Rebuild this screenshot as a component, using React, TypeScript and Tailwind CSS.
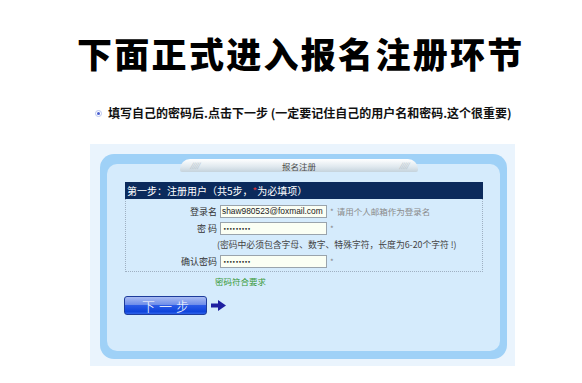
export default function App() {
  return (
    <div className="w-[582px] h-[383px] bg-white overflow-hidden font-['Noto_Sans_CJK_SC','Noto_Sans',sans-serif]">
      <div className="pt-[35px] pl-[77px] text-[35px] leading-[35px] font-black tracking-[2.3px] text-black whitespace-nowrap">
        下面正式进入报名注册环节
      </div>
      <div className="mt-[35px] h-[16px] flex items-center pl-[95px] whitespace-nowrap">
        <div className="w-[7px] h-[7px] rounded-full border border-[#b8c4ee] bg-white flex items-center justify-center">
          <div className="w-[3px] h-[3px] rounded-full bg-[#4a5fd0]" />
        </div>
        <div className="ml-[6px] text-[12px] leading-[16px] font-bold text-[#111]">
          填写自己的密码后.点击下一步 (一定要记住自己的用户名和密码.这个很重要)
        </div>
      </div>
      <div className="mt-[23px] ml-[90px] w-[425px] h-[222px] bg-[#eaf4fd] pt-[10px] pl-[10px] pr-[8px] pb-[7px]">
        <div className="relative h-full rounded-[14px] bg-[#9fd1f7] pt-[10px] px-[7px] pb-[8px]">
          <div className="absolute left-[80px] top-[5px] w-[238px] h-[13px] rounded-t-[10px] rounded-b-[2px] bg-[linear-gradient(to_bottom,#ffffff,#dfe8ee_60%,#c5d3dc)] flex items-center justify-between px-[10px]">
            <span className="text-[7px] leading-[7px] italic text-[#aab6be] tracking-[-1px]">/////</span>
            <span className="text-[8.5px] leading-[10px] text-[#4a4a4a]">报名注册</span>
            <span className="text-[7px] leading-[7px] italic text-[#aab6be] tracking-[-1px]">/////</span>
          </div>
          <div className="h-full rounded-[10px] bg-[#d5ebfc] pt-[18px] pl-[18px] pr-[17px]">
            <div className="border border-dotted border-[#9fb0c2] h-[90px]">
              <div className="h-[17px] bg-[#0b2a5c] -mx-px -mt-px flex items-center pl-[2px] text-[10px] leading-[17px] text-white whitespace-nowrap">
                第一步：注册用户（共5步，<span className="text-[#e0383c]">*</span>为必填项）
              </div>
              <div className="pt-[5px]">
                <div className="h-[15px] flex items-center">
                  <div className="w-[91px] text-right text-[9px] text-[#333]">登录名</div>
                  <div className="ml-[3px] w-[107px] h-[13px] border border-[#9aa4ac] bg-[#fbfff4] text-[8.4px] leading-[11px] pl-[1px] text-[#222] font-['Liberation_Sans',sans-serif] whitespace-nowrap overflow-hidden">
                    shaw980523@foxmail.com
                  </div>
                  <div className="ml-[3px] text-[8px] text-[#888]">*</div>
                  <div className="ml-[3px] text-[8.5px] text-[#8a8a8a] whitespace-nowrap">请用个人邮箱作为登录名</div>
                </div>
                <div className="mt-[2px] h-[15px] flex items-center">
                  <div className="w-[91px] text-right text-[9px] text-[#333]">密 码</div>
                  <div className="ml-[3px] w-[107px] h-[13px] border border-[#9aa4ac] bg-[#fbfff4] text-[6px] leading-[11px] pl-[2px] tracking-[-0.5px] text-[#222] whitespace-nowrap overflow-hidden font-['DejaVu_Sans',sans-serif]">
                    •••••••••
                  </div>
                  <div className="ml-[3px] text-[8px] text-[#888]">*</div>
                </div>
                <div className="h-[18px] flex items-center pl-[91px] text-[8.8px] text-[#444] whitespace-nowrap">
                  (密码中必须包含字母、数字、特殊字符，长度为6-20个字符 !)
                </div>
                <div className="h-[15px] flex items-center">
                  <div className="w-[91px] text-right text-[9px] text-[#333]">确认密码</div>
                  <div className="ml-[3px] w-[107px] h-[13px] border border-[#9aa4ac] bg-[#fbfff4] text-[6px] leading-[11px] pl-[2px] tracking-[-0.5px] text-[#222] whitespace-nowrap overflow-hidden font-['DejaVu_Sans',sans-serif]">
                    •••••••••
                  </div>
                  <div className="ml-[3px] text-[8px] text-[#888]">*</div>
                </div>
              </div>
            </div>
            <div className="mt-[3px] h-[12px] pl-[90px] text-[8.5px] leading-[12px] text-[#3a9a3a]">密码符合要求</div>
            <div className="mt-[9px] flex items-center">
              <div className="-ml-px w-[83px] h-[19px] rounded-[3px] border border-[#1d3c9c] bg-[linear-gradient(to_bottom,#a9bbf2,#6f8eea_45%,#2a5ae6_50%,#0f44dc_85%,#2f62e8)] flex items-center justify-center text-[13px] leading-[17px] text-white tracking-[4px] pl-[4px] font-light">
                下一步
              </div>
              <svg className="ml-[4px]" width="15" height="11" viewBox="0 0 15 11">
                <path d="M0 3.5 H7 V0 L15 5.5 L7 11 V7.5 H0 Z" fill="#1f1fa0" />
              </svg>
            </div>
          </div>
        </div>
      </div>
    </div>
  );
}
